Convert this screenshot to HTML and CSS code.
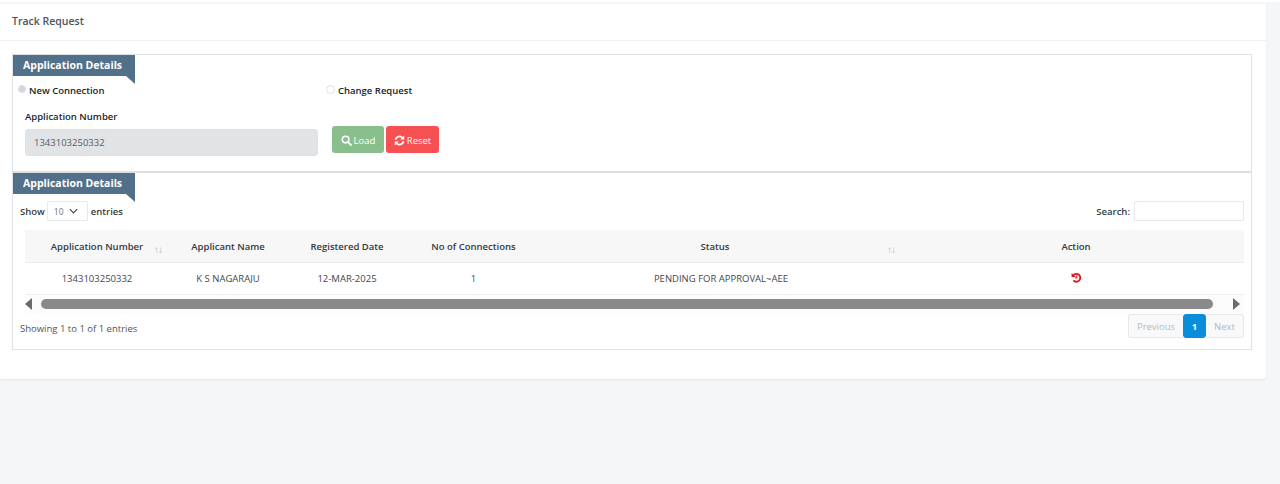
FILE: index.html
```html
<!DOCTYPE html>
<html lang="en">
<head>
  <meta charset="UTF-8">
  <title>Track Request</title>
  <link rel="stylesheet" href="styles.css">
</head>
<body>

<div class="top-strip"></div>

<main class="page-card">
  <header class="page-head">Track Request</header>

  <div class="page-body">
    <section class="panel panel-form">
      <h3 class="ribbon">Application Details</h3>
      <div class="radio-row">
        <label class="radio-item radio-new"><span class="radio checked"></span>New Connection</label>
        <label class="radio-item"><span class="radio"></span>Change Request</label>
      </div>
      <div class="form-row">
        <div class="field">
          <label class="field-label">Application Number</label>
          <input class="field-input" type="text" value="1343103250332" disabled>
        </div>
        <div class="actions">
          <button class="btn btn-load">
            <svg class="btn-icon" viewBox="0 0 12 12"><circle cx="5" cy="5" r="3.6" fill="none" stroke="#fff" stroke-width="1.7"/><path d="M7.8 7.8L11 11" stroke="#fff" stroke-width="2" stroke-linecap="round"/></svg>
            Load
          </button>
          <button class="btn btn-reset">
            <svg class="btn-icon" viewBox="0 0 12 12"><path d="M1.6 5.2A4.5 4.5 0 0 1 9.4 3" fill="none" stroke="#fff" stroke-width="2"/><path d="M11.2 .6V5H6.8z" fill="#fff"/><path d="M10.4 6.8A4.5 4.5 0 0 1 2.6 9" fill="none" stroke="#fff" stroke-width="2"/><path d="M.8 11.4V7H5.2z" fill="#fff"/></svg>
            Reset
          </button>
        </div>
      </div>
    </section>

    <section class="panel panel-table">
      <h3 class="ribbon">Application Details</h3>
      <div class="table-top">
        <div class="length">Show
          <span class="length-select">10
            <svg class="chev" viewBox="0 0 10 6"><path d="M1 1L5 5L9 1" fill="none" stroke="#444" stroke-width="1.3"/></svg>
          </span>
          entries
        </div>
        <div class="search">Search: <input class="search-input" type="text"></div>
      </div>

      <div class="table-wrap">
        <table class="data-table">
          <colgroup>
            <col class="c1"><col class="c2"><col class="c3"><col class="c4"><col class="c5"><col class="c6">
          </colgroup>
          <thead>
            <tr>
              <th class="first">Application Number<span class="sort sort-a">↑↓</span></th>
              <th>Applicant Name</th>
              <th>Registered Date</th>
              <th>No of Connections</th>
              <th class="status">Status<span class="sort sort-b">↑↓</span></th>
              <th>Action</th>
            </tr>
          </thead>
          <tbody>
            <tr>
              <td class="first">1343103250332</td>
              <td>K S NAGARAJU</td>
              <td>12-MAR-2025</td>
              <td>1</td>
              <td>PENDING FOR APPROVAL~AEE</td>
              <td>
                <svg class="undo" viewBox="0 0 12 12"><path d="M2.6 3.4A4.3 4.3 0 1 1 2.6 9.2" fill="none" stroke="#e0141e" stroke-width="2"/><path d="M.6 1.2L5.4 5.4H.6z" fill="#e0141e"/><path d="M6.4 3.6v2.8H4.6" fill="none" stroke="#e0141e" stroke-width="1.2"/></svg>
              </td>
            </tr>
          </tbody>
        </table>
        <div class="scrollbar">
          <span class="arrow arrow-left"></span>
          <span class="thumb"></span>
          <span class="arrow arrow-right"></span>
        </div>
      </div>

      <div class="table-bottom">
        <div class="info">Showing 1 to 1 of 1 entries</div>
        <div class="pager">
          <a class="page-link prev">Previous</a>
          <a class="page-link current">1</a>
          <a class="page-link next">Next</a>
        </div>
      </div>
    </section>
  </div>
</main>

</body>
</html>
```

FILE: styles.css
```css
* { margin: 0; padding: 0; box-sizing: border-box; }
body {
  background: #f5f6f8;
  color: #343a40;
  font-family: "Open Sans", "Liberation Sans", sans-serif;
  font-size: 10px;
  height: 484px;
  overflow: hidden;
}
.top-strip { height: 2px; background: #fff; margin-bottom: 2px; }

.page-card {
  width: 1266px;
  height: 375px;
  background: #fff;
  box-shadow: 0 1px 2px rgba(0, 0, 0, 0.08);
  border-radius: 0 0 3px 0;
}
.page-head {
  height: 37px;
  padding: 10px 12px 0;
  font-size: 10.5px;
  font-weight: 600;
  color: #4b545c;
  border-bottom: 1px solid #eef0f2;
}
.page-body { padding: 13px 14px 0 12px; }

.panel { border: 1px solid #dee2e6; position: relative; }
.panel-form { height: 117px; border-bottom: 0; }
.panel-table { height: 179px; border-top: 2px solid #dcdfe2; }

.ribbon {
  position: relative;
  width: 122px;
  height: 21px;
  background: #527089;
  color: #fff;
  font-size: 10.5px;
  font-weight: 700;
  line-height: 21px;
  padding-left: 10px;
}
.ribbon::after {
  content: "";
  position: absolute;
  right: 0;
  top: 21px;
  border-style: solid;
  border-width: 0 9px 8px 0;
  border-color: transparent #527089 transparent transparent;
}

.radio-row { display: flex; height: 20px; padding-top: 8px; }
.radio-item {
  display: flex;
  align-items: center;
  gap: 3px;
  font-size: 9.5px;
  font-weight: 600;
  color: #212529;
}
.radio-new { width: 313px; padding-left: 5px; }
.radio {
  width: 9px;
  height: 9px;
  border-radius: 50%;
  border: 1px solid #dcdfe2;
  background: #fff;
  margin-top: -2px;
}
.radio.checked { width: 8px; height: 8px; background: #d4d6d8; border-color: #dcdee0; }

.form-row { display: flex; padding: 14px 0 0 12px; }
.field { width: 293px; }
.field-label {
  display: block;
  font-size: 9.5px;
  font-weight: 600;
  color: #212529;
  height: 19px;
  line-height: 14px;
}
.field-input {
  display: block;
  width: 293px;
  height: 27px;
  border: 1px solid #e0e3e6;
  border-radius: 3px;
  background: #e1e4e6;
  color: #555c63;
  font-family: inherit;
  font-size: 9.5px;
  padding: 0 8px;
}
.actions { display: flex; gap: 2px; margin: 16px 0 0 14px; }
.btn {
  display: flex;
  align-items: center;
  justify-content: center;
  gap: 2px;
  height: 27px;
  padding-top: 1px;
  border: 0;
  border-radius: 3px;
  color: #fff;
  font-family: inherit;
  font-size: 9.5px;
}
.btn-icon { width: 11px; height: 11px; }
.btn-load { width: 52px; background: #88bf8c; }
.btn-reset { width: 53px; background: #f65052; }

.table-top {
  position: absolute;
  top: 28px;
  left: 7px;
  right: 7px;
  display: flex;
  justify-content: space-between;
  align-items: center;
  height: 20px;
}
.length { display: flex; align-items: center; font-size: 9.5px; font-weight: 600; color: #343a40; gap: 2px; }
.length-select {
  display: flex;
  align-items: center;
  justify-content: space-between;
  width: 41px;
  height: 20px;
  margin: 0 1px 0 0;
  padding: 0 9px 0 6px;
  border: 1px solid #e6e8ea;
  border-radius: 2px;
  font-size: 8.5px;
  font-weight: 400;
  color: #6c757d;
}
.chev { width: 9px; height: 6px; }
.search { display: flex; align-items: center; gap: 4px; font-size: 9.5px; font-weight: 600; color: #343a40; }
.search-input { width: 110px; height: 20px; border: 1px solid #e6e8ea; border-radius: 2px; }

.table-wrap { position: absolute; top: 57px; left: 12px; width: 1219px; }
.data-table { width: 1219px; border-collapse: collapse; table-layout: fixed; }
.c1 { width: 150px; }
.c2 { width: 106px; }
.c3 { width: 132px; }
.c4 { width: 121px; }
.c5 { width: 374px; }
.c6 { width: 336px; }
.data-table th {
  position: relative;
  height: 32px;
  padding-top: 1px;
  background: #f7f7f7;
  border-bottom: 1px solid #e9ecef;
  font-size: 9.5px;
  font-weight: 600;
  text-align: center;
  color: #343a40;
}
.data-table td {
  height: 32px;
  border-bottom: 1px solid #eceef0;
  font-size: 9.5px;
  text-align: center;
  color: #41484f;
}
.first { padding-right: 6px; }
.data-table th.status { padding-right: 12px; }
.sort {
  position: absolute;
  top: 12px;
  font-size: 10px;
  font-weight: 400;
  color: #b4b9be;
  letter-spacing: -1px;
}
.sort-a { left: 129px; }
.sort-b { right: 13px; }
.undo { width: 11px; height: 11px; vertical-align: middle; margin-top: -2px; }

.scrollbar {
  display: flex;
  align-items: center;
  height: 18px;
  background: #fcfcfc;
}
.thumb { width: 1172px; height: 10px; margin: 0 auto 0 0; background: #898989; border-radius: 5px; }
.arrow { width: 0; height: 0; border-style: solid; border-color: transparent; }
.arrow-left { border-width: 6px 7px 6px 0; border-right-color: #6b6b6b; margin: 0 9px 0 0; }
.arrow-right { border-width: 6px 0 6px 7px; border-left-color: #6b6b6b; margin-right: 4px; }

.table-bottom {
  position: absolute;
  top: 141px;
  left: 7px;
  right: 7px;
  display: flex;
  justify-content: space-between;
  align-items: center;
}
.info { font-size: 9.5px; color: #4b545c; margin-top: 4px; }
.pager { display: flex; height: 24px; }
.page-link {
  display: flex;
  align-items: center;
  justify-content: center;
  font-size: 9.5px;
  color: #b4b9be;
  background: #f8f9fa;
  border: 1px solid #e6e8ea;
}
.prev { width: 55px; border-radius: 3px 0 0 3px; border-right: 0; }
.current { width: 23px; background: #0a8ddb; border-color: #0a8ddb; color: #fff; font-weight: 700; border-radius: 3px; }
.next { width: 38px; border-radius: 0 3px 3px 0; border-left: 0; }
```
